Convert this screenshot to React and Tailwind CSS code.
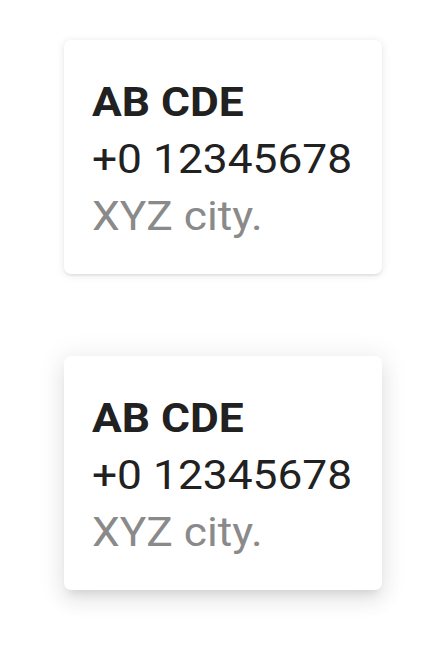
export default function App() {
  const Card = ({ shadow }) => (
    <div className={`w-[318px] rounded-[7px] bg-white pl-[28px] pr-4 pt-[34px] pb-[29px] ${shadow}`}>
      <div className="origin-left scale-x-[1.107] text-[40px] leading-[57px] font-bold text-[#212121]">AB CDE</div>
      <div className="origin-left scale-x-[1.107] text-[40px] leading-[57px] text-[#212121]">+0 12345678</div>
      <div className="origin-left scale-x-[1.107] text-[40px] leading-[57px] text-[#8a8a8a]">XYZ city.</div>
    </div>
  );
  return (
    <div className="min-h-[651px] w-[444px] bg-white pt-[40px] pl-[64px] flex flex-col gap-[82px]" style={{ fontFamily: "Roboto, sans-serif" }}>
      <Card shadow="shadow-[0_2px_2px_0_rgba(0,0,0,0.06),0_1px_8px_0_rgba(0,0,0,0.1)]" />
      <Card shadow="shadow-[0_8px_10px_-5px_rgba(0,0,0,0.1),0_12px_20px_2px_rgba(0,0,0,0.05),0_2px_24px_6px_rgba(0,0,0,0.06)]" />
    </div>
  );
}
